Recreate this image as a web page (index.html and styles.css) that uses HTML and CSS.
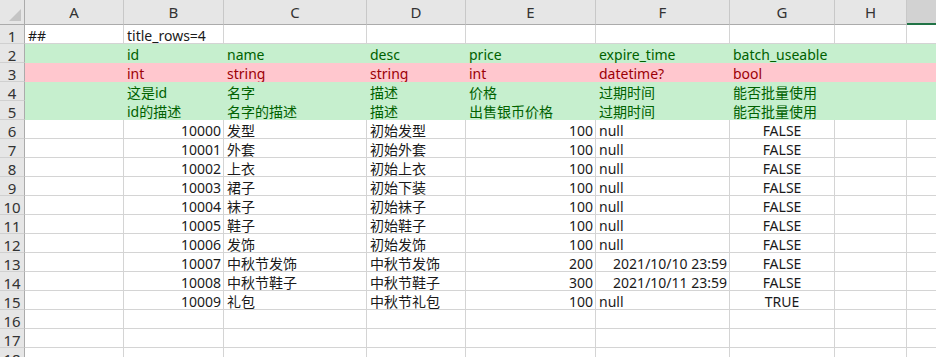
FILE: index.html
```html
<!DOCTYPE html>
<html lang="zh">
<head>
  <meta charset="UTF-8">
  <title>item.xlsx</title>
  <link rel="stylesheet" href="styles.css">
</head>
<body>

  <div class="sheet">
    <div class="row head">
      <div class="corner"><span class="tri"></span></div>
      <div class="col">A</div><div class="col">B</div><div class="col">C</div><div class="col">D</div>
      <div class="col">E</div><div class="col">F</div><div class="col">G</div><div class="col">H</div>
      <div class="col sel"></div>
    </div>

    <div class="row">
      <div class="num">1</div>
      <div class="c">##</div><div class="c">title_rows=4</div><div class="c"></div><div class="c"></div>
      <div class="c"></div><div class="c"></div><div class="c"></div><div class="c"></div><div class="c"></div>
    </div>
    <div class="row good">
      <div class="num">2</div>
      <div class="c"></div><div class="c">id</div><div class="c">name</div><div class="c">desc</div>
      <div class="c">price</div><div class="c">expire_time</div><div class="c">batch_useable</div><div class="c"></div><div class="c"></div>
    </div>
    <div class="row bad">
      <div class="num">3</div>
      <div class="c"></div><div class="c">int</div><div class="c">string</div><div class="c">string</div>
      <div class="c">int</div><div class="c">datetime?</div><div class="c">bool</div><div class="c"></div><div class="c"></div>
    </div>
    <div class="row good">
      <div class="num">4</div>
      <div class="c"></div><div class="c">这是id</div><div class="c">名字</div><div class="c">描述</div>
      <div class="c">价格</div><div class="c">过期时间</div><div class="c">能否批量使用</div><div class="c"></div><div class="c"></div>
    </div>
    <div class="row good">
      <div class="num">5</div>
      <div class="c"></div><div class="c">id的描述</div><div class="c">名字的描述</div><div class="c">描述</div>
      <div class="c">出售银币价格</div><div class="c">过期时间</div><div class="c">能否批量使用</div><div class="c"></div><div class="c"></div>
    </div>

    <div class="row">
      <div class="num">6</div>
      <div class="c"></div><div class="c r">10000</div><div class="c">发型</div><div class="c">初始发型</div>
      <div class="c r">100</div><div class="c">null</div><div class="c m">FALSE</div><div class="c"></div><div class="c"></div>
    </div>
    <div class="row">
      <div class="num">7</div>
      <div class="c"></div><div class="c r">10001</div><div class="c">外套</div><div class="c">初始外套</div>
      <div class="c r">100</div><div class="c">null</div><div class="c m">FALSE</div><div class="c"></div><div class="c"></div>
    </div>
    <div class="row">
      <div class="num">8</div>
      <div class="c"></div><div class="c r">10002</div><div class="c">上衣</div><div class="c">初始上衣</div>
      <div class="c r">100</div><div class="c">null</div><div class="c m">FALSE</div><div class="c"></div><div class="c"></div>
    </div>
    <div class="row">
      <div class="num">9</div>
      <div class="c"></div><div class="c r">10003</div><div class="c">裙子</div><div class="c">初始下装</div>
      <div class="c r">100</div><div class="c">null</div><div class="c m">FALSE</div><div class="c"></div><div class="c"></div>
    </div>
    <div class="row">
      <div class="num">10</div>
      <div class="c"></div><div class="c r">10004</div><div class="c">袜子</div><div class="c">初始袜子</div>
      <div class="c r">100</div><div class="c">null</div><div class="c m">FALSE</div><div class="c"></div><div class="c"></div>
    </div>
    <div class="row">
      <div class="num">11</div>
      <div class="c"></div><div class="c r">10005</div><div class="c">鞋子</div><div class="c">初始鞋子</div>
      <div class="c r">100</div><div class="c">null</div><div class="c m">FALSE</div><div class="c"></div><div class="c"></div>
    </div>
    <div class="row">
      <div class="num">12</div>
      <div class="c"></div><div class="c r">10006</div><div class="c">发饰</div><div class="c">初始发饰</div>
      <div class="c r">100</div><div class="c">null</div><div class="c m">FALSE</div><div class="c"></div><div class="c"></div>
    </div>
    <div class="row">
      <div class="num">13</div>
      <div class="c"></div><div class="c r">10007</div><div class="c">中秋节发饰</div><div class="c">中秋节发饰</div>
      <div class="c r">200</div><div class="c r">2021/10/10 23:59</div><div class="c m">FALSE</div><div class="c"></div><div class="c"></div>
    </div>
    <div class="row">
      <div class="num">14</div>
      <div class="c"></div><div class="c r">10008</div><div class="c">中秋节鞋子</div><div class="c">中秋节鞋子</div>
      <div class="c r">300</div><div class="c r">2021/10/11 23:59</div><div class="c m">FALSE</div><div class="c"></div><div class="c"></div>
    </div>
    <div class="row">
      <div class="num">15</div>
      <div class="c"></div><div class="c r">10009</div><div class="c">礼包</div><div class="c">中秋节礼包</div>
      <div class="c r">100</div><div class="c">null</div><div class="c m">TRUE</div><div class="c"></div><div class="c"></div>
    </div>

    <div class="row">
      <div class="num">16</div>
      <div class="c"></div><div class="c"></div><div class="c"></div><div class="c"></div><div class="c"></div>
      <div class="c"></div><div class="c"></div><div class="c"></div><div class="c"></div>
    </div>
    <div class="row">
      <div class="num">17</div>
      <div class="c"></div><div class="c"></div><div class="c"></div><div class="c"></div><div class="c"></div>
      <div class="c"></div><div class="c"></div><div class="c"></div><div class="c"></div>
    </div>
    <div class="row">
      <div class="num">18</div>
      <div class="c"></div><div class="c"></div><div class="c"></div><div class="c"></div><div class="c"></div>
      <div class="c"></div><div class="c"></div><div class="c"></div><div class="c"></div>
    </div>
  </div>

</body>
</html>
```

FILE: styles.css
```css
html, body {
  margin: 0;
  padding: 0;
  background-color: #ffffff;
  overflow: hidden;
}
body {
  width: 936px;
  height: 357px;
  font-family: "Noto Sans", "Noto Sans CJK SC", sans-serif;
  font-size: 14px;
  color: #1a1a1a;
}
.sheet {
  width: 1000px;
}
.row {
  display: grid;
  grid-template-columns: 25px 99px 100px 143px 99px 130px 134px 105px 72px 93px;
  height: 19px;
}
.row > div {
  box-sizing: border-box;
  border-right: 1px solid #d4d4d4;
  border-bottom: 1px solid #d4d4d4;
  white-space: nowrap;
  padding-top: 1px;
  line-height: 20px;
  height: 19px;
}
.c {
  padding-left: 3px;
  padding-right: 3px;
}
.c.r {
  text-align: right;
  padding-right: 2px;
}
.c.m {
  text-align: center;
}

/* header row */
.row.head {
  height: 25px;
}
.row.head > div {
  height: 25px;
  padding-top: 0;
  line-height: 25px;
  background-color: #e6e6e6;
  border-right: 1px solid #c8c8c8;
  border-bottom: 1px solid #ababab;
  color: #333333;
  text-align: center;
  font-size: 15px;
}
.row.head .corner {
  position: relative;
  border-right-color: #ababab;
}
.corner .tri {
  position: absolute;
  right: 3px;
  bottom: 3px;
  width: 0;
  height: 0;
  border-left: 12px solid transparent;
  border-bottom: 12px solid #c4c4c4;
}
.row.head .col.sel {
  background-color: #d2d2d2;
  border-bottom: 2px solid #217346;
}

/* row numbers */
.row > .num {
  background-color: #e6e6e6;
  border-right: 1px solid #ababab;
  border-bottom: 1px solid #d0d0d0;
  color: #333333;
  text-align: center;
  font-size: 15px;
}

/* Excel good / bad styles */
.good > .c {
  background-color: #c6efce;
  border-color: #c6efce;
  color: #006100;
}
.bad > .c {
  background-color: #ffc7ce;
  border-color: #ffc7ce;
  color: #9c0006;
}
```
